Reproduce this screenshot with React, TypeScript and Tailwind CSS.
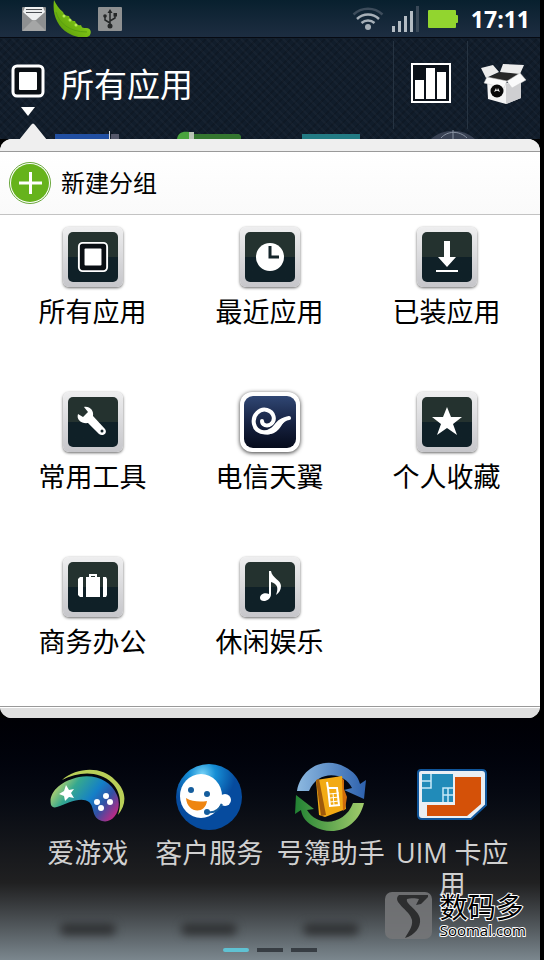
import type { ReactNode } from "react";

function StatusBar() {
  return (
    <div className="flex h-[38px] items-center justify-between border-b border-[#060a12] bg-linear-to-b from-[#08202e] to-[#1d2d41] pr-[10px] pl-[22px]">
      <div className="flex items-center">
        <svg width="24" height="24" viewBox="0 0 24 24" aria-label="Mail">
          <rect width="24" height="24" rx="1" fill="#8e9091" />
          <path d="M0 24 11 13h2l11 11z" fill="#a5a6a6" />
          <path d="M1 5 3 0h18l2 5-9 8h-4z" fill="#eef0f0" />
          <path d="M4 2.500h16M4 5.500h16" stroke="#4c5054" />
        </svg>
        <svg className="ml-[7px]" width="39" height="37" viewBox="0 0 39 37" aria-label="Pea pod">
          <defs>
            <linearGradient id="pea" x1="0" y1="1" x2="1" y2="0">
              <stop offset="0" stopColor="#4f8f08" />
              <stop offset=".5" stopColor="#78bd13" />
              <stop offset="1" stopColor="#b4ec3d" />
            </linearGradient>
          </defs>
          <path d="M1 0C-1 14 4 26 15 33c8 5 19 6 22 2 2-4 0-7-4-7-3 0-4 0-5-3-3 1-5-1-6-4-3 0-5-1-6-5-3 0-5-1-6-4C6 9 3 4 1 0z" fill="url(#pea)" />
          <path d="M3 12c3 11 13 20 31 20" fill="none" stroke="#5ba00f" />
          <g fill="#b9ea55">
            <circle cx="11" cy="16" r="1.500" />
            <circle cx="17" cy="20" r="1.500" />
            <circle cx="23" cy="25" r="1.500" />
          </g>
        </svg>
        <svg className="ml-[6px]" width="24" height="24" viewBox="0 0 24 24" aria-label="USB">
          <rect width="24" height="24" rx="1" fill="#8f9192" />
          <g stroke="#252728" strokeWidth="1.500" fill="none">
            <path d="M12 20V5M12 16l-5-3V9M12 14l5-3V8" />
          </g>
          <path d="m12 2 2.500 4h-5z" fill="#252728" />
          <circle cx="12" cy="19" r="2.500" fill="#252728" />
          <circle cx="7" cy="9" r="1.800" fill="#252728" />
          <path d="M15.500 6h3.500v3.500h-3.500z" fill="#252728" />
        </svg>
      </div>
      <div className="flex items-center">
        <svg width="32" height="24" viewBox="0 0 32 24" fill="none" strokeWidth="2.500" aria-label="Wi-Fi">
          <path d="M1.500 7.500a21 21 0 0 1 29 0" stroke="#3d4c5b" />
          <path d="M5 12a16 16 0 0 1 22 0" stroke="#a7b0b8" />
          <path d="M9.500 16a10 10 0 0 1 13 0" stroke="#a7b0b8" />
          <circle cx="16" cy="20" r="3" fill="#a7b0b8" />
        </svg>
        <svg className="ml-[8px]" width="28" height="27" viewBox="0 0 28 27" aria-label="Signal">
          <path d="M0 21h3v6H0zM6 16h3v11H6zM12 11h3v16h-3zM18 6h3v21h-3z" fill="#b4bcc3" />
          <path d="M24 1h3v26h-3z" fill="#3a4958" />
        </svg>
        <svg className="ml-[8px]" width="30" height="18" viewBox="0 0 30 18" aria-label="Battery">
          <rect width="28" height="18" rx="1" fill="#92d52f" />
          <rect x="27" y="5" width="3" height="8" rx="1" fill="#92d52f" />
        </svg>
        <span className="ml-[13px] font-['Open_Sans',sans-serif] text-[23px] leading-8 font-bold">17:11</span>
      </div>
    </div>
  );
}

function AllAppsGlyph({ size, stroke = 3 }: { size: number; stroke?: number }) {
  return (
    <svg width={size} height={size} viewBox="0 0 34 34" aria-hidden="true">
      <rect x="2" y="2" width="30" height="30" rx="4" fill="#0a0f14" stroke="#fff" strokeWidth={stroke} />
      <rect x="8" y="8" width="18" height="18" rx="1" fill="#fff" />
    </svg>
  );
}

function Header() {
  return (
    <header className="flex h-[101px] flex-col justify-between bg-[#111d2b] bg-[repeating-linear-gradient(45deg,#ffffff06_0_2px,transparent_2px_6px),repeating-linear-gradient(-45deg,#00000022_0_2px,transparent_2px_6px)]">
      <div className="flex h-[91px] pt-[3px]">
        <button type="button" className="flex flex-1 pl-[11px] text-left">
          <span className="flex w-[34px] flex-col items-center pt-[23px]">
            <AllAppsGlyph size={34} />
            <svg className="mt-[9px]" width="14" height="9" viewBox="0 0 14 9" aria-hidden="true">
              <path d="M0 0h14L7 9z" fill="#fff" />
            </svg>
          </span>
          <span className="ml-4 pt-6 text-[33px] leading-10">所有应用</span>
        </button>
        <button type="button" aria-label="Usage" className="flex w-[74px] justify-center border-l border-[#263341] pt-[22px]">
          <svg width="40" height="40" viewBox="0 0 40 40">
            <path d="M1 1h38v38H1z" fill="#0b1119" stroke="#fff" strokeWidth="2" />
            <path d="M4 17h9v19H4zM15 5h9v31h-9zM26 9h9v27h-9z" fill="#fff" />
          </svg>
        </button>
        <button type="button" aria-label="Market" className="flex w-[73px] justify-center border-l border-[#263341] pt-[22px]">
          <svg width="46" height="42" viewBox="0 0 46 42">
            <path d="m6 16 17 5 17-6v20l-15 6-18-5z" fill="#f4f4f4" />
            <path d="m25 21 15-6v20l-15 6z" fill="#cfcfd1" />
            <path d="m6 15 13-6 20 1-13 9z" fill="#272727" />
            <path d="m0 5 12-3 6 7-13 6zM22 1l21 1-4 9-20-2z" fill="#ececec" />
            <path d="m6 14 20 4-3 7-20-5zM39 10l6 7-14 8-5-7z" fill="#fafafa" stroke="#c8c8c8" strokeWidth=".5" />
            <circle cx="16" cy="28" r="6.500" fill="#080808" />
            <path d="m13 29 2-4 1 3 1-3 2 4-2-1h-2z" fill="#eee" />
          </svg>
        </button>
      </div>
      <svg className="w-full" height="9" viewBox="0 0 540 9" aria-hidden="true">
        <path d="M55 4h54v5H55z" fill="#214fa2" />
        <path d="M109 1h1v8h-1z" fill="#dadde1" />
        <path d="M111 4h8v5h-8z" fill="#55586a" />
        <path d="M177 9c1-6 5-8 12-7v7z" fill="#4aa43e" />
        <path d="M189 2h5v7h-5z" fill="#b9c4b5" />
        <path d="M194 4h45l2 2v3h-47z" fill="#34762f" />
        <path d="M302 4h58v5h-58z" fill="#227b84" />
        <path d="M431 9c12-11 32-11 44 0z" fill="#394254" />
        <path d="M441 8c6-7 18-8 26 0M453 0v9" fill="none" stroke="#8993a2" />
      </svg>
    </header>
  );
}

const tile = "flex size-[60px] items-center justify-center rounded-[6px] bg-linear-to-b from-[#eeeeef] to-[#c6c6ca] shadow-[0_1px_3px_#00000099]";
const face = "flex size-[50px] items-center justify-center rounded-[5px] bg-[#16262b] bg-linear-to-b from-[#24322f] from-50% to-[#0f2027] to-50%";

function Group({ name, children, bird = false }: { name: string; children: ReactNode; bird?: boolean }) {
  return (
    <button type="button" className="flex h-[165px] flex-col items-center">
      {bird ? (
        <span className="flex size-[60px] items-center justify-center rounded-[12px] bg-white shadow-[0_1px_4px_#000000cc]">
          <span className="flex size-[52px] items-center justify-center rounded-[9px] bg-linear-to-b from-[#304774] via-[#182444] to-[#060b1b]">{children}</span>
        </span>
      ) : (
        <span className={tile}>
          <span className={face}>{children}</span>
        </span>
      )}
      <span className="mt-[5px] text-[27px] leading-10">{name}</span>
    </button>
  );
}

function Glyph({ children }: { children: ReactNode }) {
  return (
    <svg width="50" height="50" viewBox="0 0 50 50" fill="#fff" aria-hidden="true">
      {children}
    </svg>
  );
}

function GroupPanel() {
  return (
    <section className="relative rounded-[12px] bg-white text-black">
      <svg className="absolute -top-4 left-[19px]" width="28" height="17" viewBox="0 0 28 17" aria-hidden="true">
        <path d="M0 17 12 2q2-3 4 0l12 15z" fill="#efefef" />
      </svg>
      <div className="h-[13px] rounded-t-[12px] border-b border-[#999] bg-[#efefef]" />
      <button type="button" className="flex h-[63px] w-full items-center border-b border-[#c3c3c3] bg-linear-to-b from-white to-[#fafafa] pl-[9px] text-[24px] leading-8">
        <svg width="42" height="42" viewBox="0 0 42 42" aria-hidden="true">
          <circle cx="21" cy="21" r="20.500" fill="#fff" stroke="#68a63a" />
          <circle cx="21" cy="21" r="19" fill="#66b31c" />
          <path d="M10 21h23M21.500 10v22" stroke="#fff" strokeWidth="3" />
        </svg>
        <span className="ml-[10px]">新建分组</span>
      </button>
      <div className="grid grid-cols-3 pt-3 pr-[5px] pl-1">
        <Group name="所有应用">
          <AllAppsGlyph size={32} stroke={2} />
        </Group>
        <Group name="最近应用">
          <Glyph>
            <circle cx="25" cy="25" r="14" />
            <path d="M25 14v11h9" fill="none" stroke="#14252a" strokeWidth="3" />
          </Glyph>
        </Group>
        <Group name="已装应用">
          <Glyph>
            <path d="M22 9h6v16h6l-9 10-9-10h6zM14 38h22v2H14z" />
          </Glyph>
        </Group>
        <Group name="常用工具">
          <Glyph>
            <path d="M16 10c6-1 10 4 9 9l12 13c3 4-2 8-6 5L20 26c-6 1-12-3-10-9l5 3 5-5z" />
            <circle cx="34" cy="34" r="1.500" fill="#14252a" />
          </Glyph>
        </Group>
        <Group name="电信天翼" bird>
          <Glyph>
            <path d="M44 21C37 22 35 27 31 31c-6 7-20 6-22-4C7 18 15 11 22 13c7 2 9 10 4 14-4 3-9 1-9-3" fill="none" stroke="#fff" strokeWidth="4" strokeLinecap="round" />
            <path d="M44 20c-8 0-11 3-15 8-5 6-11 6-14 5 1 5 12 7 19-1 4-5 5-9 10-12z" />
          </Glyph>
        </Group>
        <Group name="个人收藏">
          <Glyph>
            <path d="m25 10 4 10h11l-9 7 4 11-10-7-10 7 4-11-9-7h11z" />
          </Glyph>
        </Group>
        <Group name="商务办公">
          <Glyph>
            <path d="M12 15h3v20h-3l-2-2V17zM18 15h14v20H18zM35 15h3l1 2v16l-1 2h-3z" />
            <path d="M22 15v-2h6v2" fill="none" stroke="#fff" strokeWidth="2" />
          </Glyph>
        </Group>
        <Group name="休闲娱乐">
          <Glyph>
            <path d="M24 9h2c1 7 10 9 10 15 0 4-2 7-5 9 3-8 1-11-5-13v12c0 8-11 9-11 4 0-4 5-6 9-4z" />
          </Glyph>
        </Group>
      </div>
      <div className="-mt-4 h-[12px] rounded-b-[12px] border-t border-[#999] bg-[#dfdfdf] shadow-[inset_0_1px_#fff]" />
    </section>
  );
}

function DockApp({ name, children }: { name: string; children: ReactNode }) {
  return (
    <button type="button" className="flex flex-col items-center text-[27px] leading-[31px] text-[#d0d0d0]">
      <svg width="76" height="72" viewBox="0 0 76 72" aria-hidden="true">
        {children}
      </svg>
      <span className="mt-[3px] w-full">{name}</span>
    </button>
  );
}

const dockShadow = "h-3 w-14 rounded-full bg-[#303234] blur-[4px]";

function Dock() {
  return (
    <section className="relative min-h-[242px] bg-linear-to-b from-[#000005] via-[#202021] via-68% to-[#7b878e]">
      <div className="grid grid-cols-4 items-start px-[27px] pt-11">
        <DockApp name="爱游戏">
          <defs>
            <linearGradient id="pad" x1="0" x2="1" y1=".3" y2=".8">
              <stop offset="0" stopColor="#c3d66c" />
              <stop offset=".25" stopColor="#35a88f" />
              <stop offset=".55" stopColor="#147fc8" />
              <stop offset=".75" stopColor="#3250a4" />
              <stop offset="1" stopColor="#c52783" />
            </linearGradient>
          </defs>
          <path d="M12 18C27 5 52 4 65 18c12 11 12 24 3 35 4-13 2-24-6-32C48 8 28 10 12 18z" fill="#b9cf58" />
          <path d="M1 43c-3-12 9-24 28-28 17-3 32 4 38 18 6 15-4 29-15 26-11-3-7-14-13-19-8-6-21 1-32 5-3 1-5 0-6-2z" fill="url(#pad)" />
          <path d="m16 23 3 5 5-1-3 4 3 5-5-1-4 4-1-5-5-2 5-3z" fill="#fff" />
          <g fill="#fff">
            <circle cx="56" cy="34" r="3" />
            <circle cx="47" cy="40" r="3" />
            <circle cx="60" cy="40" r="3" />
            <circle cx="51" cy="46" r="3" />
          </g>
        </DockApp>
        <DockApp name="客户服务">
          <defs>
            <radialGradient id="ball" cx=".4" cy=".15">
              <stop offset="0" stopColor="#75d2f7" />
              <stop offset=".4" stopColor="#168ed5" />
              <stop offset="1" stopColor="#064b9e" />
            </radialGradient>
          </defs>
          <circle cx="38" cy="35" r="33" fill="url(#ball)" />
          <ellipse cx="30" cy="34" rx="21" ry="22" fill="#fff" />
          <circle cx="20" cy="28" r="3" fill="#155d9d" />
          <circle cx="36" cy="32" r="3" fill="#155d9d" />
          <path d="M15 36c6 4 15 4 21 3-2 14-20 12-21-3z" fill="#ee8511" />
          <circle cx="54" cy="38" r="6" fill="#fff" />
          <path d="M51 42c-3 6-8 9-14 8" fill="none" stroke="#155d9d" strokeWidth="2" />
          <circle cx="36" cy="50" r="3" fill="#155d9d" />
        </DockApp>
        <DockApp name="号簿助手">
          <defs>
            <linearGradient id="blueArrow"><stop stopColor="#8db9e0" /><stop offset="1" stopColor="#2d61ad" /></linearGradient>
            <linearGradient id="greenArrow"><stop stopColor="#218233" /><stop offset="1" stopColor="#a2cc6c" /></linearGradient>
          </defs>
          <path d="M4 29C8 6 31-6 52 5c9 5 13 9 15 17l6-4-2 19-20-9 8-2C52 10 25 7 16 29z" fill="url(#blueArrow)" />
          <path d="M71 41C65 66 41 76 20 64 11 59 9 53 8 48l-6 4 1-19 18 14-7 1c11 18 38 15 46-7z" fill="url(#greenArrow)" />
          <path d="m23 18 26-4 4 33-21 8-6-2z" fill="#f2aa14" />
          <path d="m23 18 3-1 7 36-5 1z" fill="#a05a0a" />
          <path d="m49 16 2 2v9l3 8-2 12-2 2z" fill="#cf6c0c" />
          <path d="M35 26h9l2 17-9 1zM35 26l-1-6" fill="none" stroke="#fff" strokeWidth="2" />
          <path d="m36 32 10-1M37 36l9-1M37 40l9-1M40 31l1 12" stroke="#fff" />
        </DockApp>
        <DockApp name="UIM 卡应用">
          <path d="M7 8h61q4 0 4 4v31L57 57H8q-4 0-4-4V11q0-3 3-3z" fill="#e9eff4" stroke="#10569b" strokeWidth="2" />
          <path d="M41 15h26v27L53 54H13V43h28z" fill="#d45108" />
          <path d="M8 12h31v28H8z" fill="#218bb9" />
          <path d="M8 19h9v-7M8 26h9v-7M29 40V26h10M29 33h10M34 26v14" fill="none" stroke="#c6e9f7" strokeWidth="1.500" />
        </DockApp>
      </div>
      <div className="absolute bottom-[25px] left-0 grid w-full grid-cols-4 justify-items-center px-[27px]">
        <span className={dockShadow} />
        <span className={dockShadow} />
        <span className={dockShadow} />
      </div>
      <div className="absolute bottom-2 left-0 flex w-full items-center justify-center gap-2">
        <span className="h-1 w-[26px] rounded-full bg-[#5fc2d3]" />
        <span className="h-1 w-[26px] bg-[#373d43]" />
        <span className="h-1 w-[26px] bg-[#373d43]" />
      </div>
      <div className="absolute right-[14px] bottom-[21px] flex items-center gap-2">
        <svg width="47" height="47" viewBox="0 0 47 47" aria-hidden="true">
          <rect width="47" height="47" rx="7" fill="#747678" fillOpacity=".9" />
          <path d="M43 3H14c-8 7 11 15 13 25 1 7-4 12-7 18 10-3 16-11 15-19-1-9-15-15-13-20 3-1 9-1 12 0l-3 6 5-1 7-7z" fill="#2d2e2f" />
        </svg>
        <div className="flex flex-col text-black [-webkit-text-stroke:2px_white] [paint-order:stroke_fill]">
          <span className="text-[28px] leading-[28px]">数码多</span>
          <span className="font-['Open_Sans',sans-serif] text-[15px] leading-[18px]">Soomal.com</span>
        </div>
      </div>
    </section>
  );
}

export default function App() {
  return (
    <div className="min-h-screen bg-black pr-1 font-['Open_Sans','Noto_Sans_CJK_SC',sans-serif] text-white">
      <StatusBar />
      <Header />
      <main className="bg-black">
        <GroupPanel />
        <Dock />
      </main>
    </div>
  );
}
